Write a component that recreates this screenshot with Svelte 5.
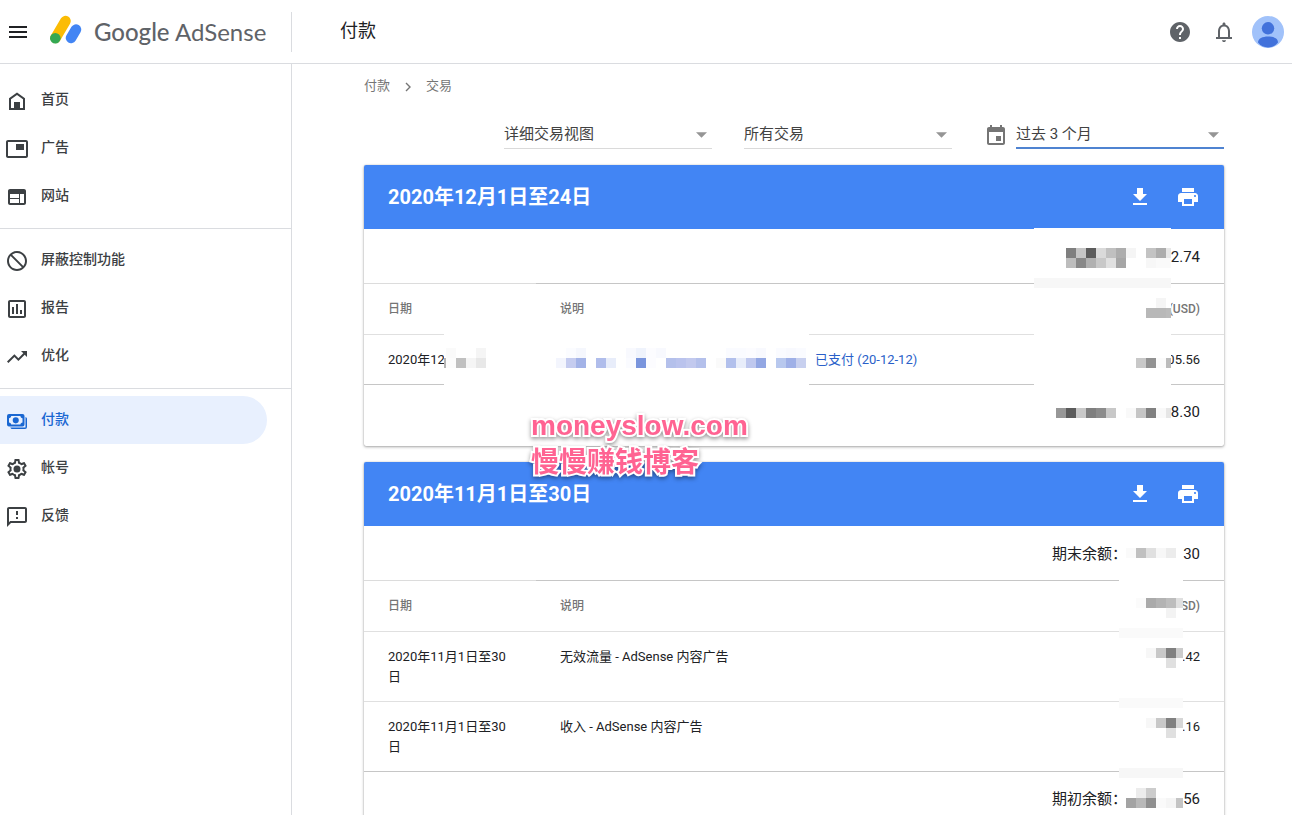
<script>
  const navGroups = [
    [
      { id: 'home', label: '首页' },
      { id: 'ads', label: '广告' },
      { id: 'sites', label: '网站' }
    ],
    [
      { id: 'block', label: '屏蔽控制功能' },
      { id: 'report', label: '报告' },
      { id: 'trend', label: '优化' }
    ],
    [
      { id: 'pay', label: '付款', active: true },
      { id: 'gear', label: '帐号' },
      { id: 'feedback', label: '反馈' }
    ]
  ];

  const icons = {
    home: 'M12 3.500 4 9.300V21h16V9.300zM18 19h-3v-6H9v6H6v-8.700l6-4.300 6 4.300z',
    ads: 'M19 7h-8v6h8V7zm2-4H3c-1.100 0-2 .9-2 2v14c0 1.100.9 2 2 2h18c1.100 0 2-.9 2-2V5c0-1.100-.9-2-2-2zm0 16H3V5h18v14z',
    sites: 'M19 4H5c-1.100 0-2 .9-2 2v12c0 1.100.9 2 2 2h14c1.100 0 2-.9 2-2V6c0-1.100-.9-2-2-2zM5 9h9v4H5V9zm0 5h9v4H5v-4zm14 4h-4V9h4v9z',
    block: 'M12 2C6.480 2 2 6.480 2 12s4.480 10 10 10 10-4.480 10-10S17.520 2 12 2zM20 12c0-4.420-3.580-8-8-8-1.850 0-3.550.63-4.900 1.690L18.310 16.900C19.370 15.550 20 13.850 20 12zm-8 8c1.850 0 3.550-.63 4.900-1.690L5.690 7.100C4.630 8.450 4 10.150 4 12c0 4.420 3.580 8 8 8z',
    report: 'M19 3H5c-1.100 0-2 .9-2 2v14c0 1.100.9 2 2 2h14c1.100 0 2-.9 2-2V5c0-1.100-.9-2-2-2zm0 16H5V5h14v14zM7 10h2v7H7zm4-3h2v10h-2zm4 6h2v4h-2z',
    trend: 'M16 6l2.290 2.290-4.880 4.880-4-4L2 16.590 3.410 18l6-6 4 4 6.300-6.290L22 12V6z',
    gear: 'M19.430 12.980c.04-.32.07-.64.07-.98s-.03-.66-.07-.98l2.110-1.650c.19-.15.24-.42.12-.64l-2-3.460c-.09-.16-.26-.25-.44-.25-.06 0-.12.01-.17.03l-2.490 1c-.52-.4-1.080-.73-1.690-.98l-.38-2.650C14.460 2.180 14.250 2 14 2h-4c-.25 0-.46.18-.49.42l-.38 2.650c-.61.25-1.170.59-1.690.98l-2.490-1c-.06-.02-.12-.03-.18-.03-.17 0-.34.09-.43.25l-2 3.460c-.13.22-.07.49.12.64l2.110 1.650c-.04.32-.07.65-.07.98s.03.66.07.98l-2.110 1.650c-.19.15-.24.42-.12.64l2 3.460c.09.16.26.25.44.25.06 0 .12-.01.17-.03l2.490-1c.52.4 1.080.73 1.690.98l.38 2.650c.03.24.24.42.49.42h4c.25 0 .46-.18.49-.42l.38-2.650c.61-.25 1.170-.59 1.690-.98l2.490 1c.06.02.12.03.18.03.17 0 .34-.09.43-.25l2-3.460c.12-.22.07-.49-.12-.64l-2.110-1.650zm-1.980-1.710c.04.31.05.52.05.73s-.02.43-.05.73l-.14 1.130.89.7 1.080.84-.7 1.210-1.270-.51-1.040-.42-.9.68c-.43.32-.84.56-1.250.73l-1.060.43-.16 1.130-.2 1.350h-1.400l-.19-1.350-.16-1.130-1.060-.43c-.43-.18-.83-.41-1.230-.71l-.91-.7-1.060.43-1.270.51-.7-1.210 1.080-.84.89-.7-.14-1.130c-.03-.31-.05-.54-.05-.74s.02-.43.05-.73l.14-1.130-.89-.7-1.080-.84.7-1.210 1.270.51 1.040.42.9-.68c.43-.32.84-.56 1.250-.73l1.060-.43.16-1.130.2-1.350h1.390l.19 1.350.16 1.130 1.060.43c.43.18.83.41 1.230.71l.91.7 1.060-.43 1.270-.51.7 1.210-1.070.85-.89.7.14 1.130zM12 8.500a3.500 3.500 0 1 0 0 7 3.500 3.500 0 0 0 0-7z',
    feedback: 'M20 2H4c-1.100 0-1.990.9-1.990 2L2 22l4-4h14c1.100 0 2-.9 2-2V4c0-1.100-.9-2-2-2zm0 14H5.170L4 17.170V4h16v12zm-9-4h2v2h-2zm0-6h2v4h-2z',
    pay: 'M4 5h13.500a2 2 0 0 1 2 2v8.500a2 2 0 0 1-2 2H4a2 2 0 0 1-2-2V7a2 2 0 0 1 2-2zm0 4.300v4.100c1.200 0 2.200 1 2.200 2.200h9.200c0-1.200 1-2.200 2.100-2.200V9.300c-1.200 0-2.100-1-2.100-2.200H6.200C6.200 8.300 5.200 9.300 4 9.300zM10.750 8.300a3.050 3.050 0 1 1 0 6.100 3.050 3.050 0 0 1 0-6.100zM20.500 8c.9.200 1.500.9 1.500 1.800V18a2 2 0 0 1-2 2H7.500c-1.200 0-2-.6-2.200-1.500h15.200z',
    download: 'M19 9h-4V3H9v6H5l7 7 7-7zM5 18v2h14v-2H5z',
    print: 'M19 8H5c-1.660 0-3 1.340-3 3v6h4v4h12v-4h4v-6c0-1.660-1.340-3-3-3zm-3 11H8v-5h8v5zm3-7c-.55 0-1-.45-1-1s.45-1 1-1 1 .45 1 1-.45 1-1 1zm-1-9H6v4h12V3z',
    help: 'M12 2C6.480 2 2 6.480 2 12s4.480 10 10 10 10-4.480 10-10S17.520 2 12 2zm1 17h-2v-2h2v2zm2.070-7.750l-.9.92C13.450 12.900 13 13.500 13 15h-2v-.5c0-1.100.45-2.100 1.170-2.830l1.240-1.260c.37-.36.59-.86.59-1.410 0-1.100-.9-2-2-2s-2 .9-2 2H8c0-2.210 1.790-4 4-4s4 1.790 4 4c0 .88-.36 1.680-.93 2.250z',
    bell: 'M18 17v-6c0-3.070-1.630-5.640-4.500-6.320V4c0-.83-.67-1.500-1.500-1.500s-1.500.67-1.500 1.500v.68C7.640 5.360 6 7.920 6 11v6H4v2h16v-2h-2zm-2 0H8v-6c0-2.480 1.510-4.500 4-4.500s4 2.020 4 4.500v6zm-6 3.200h4c0 1-.9 1.800-2 1.800s-2-.8-2-1.800z',
    calendar: 'M17 12h-5v5h5v-5zM16 1v2H8V1H6v2H5c-1.110 0-1.990.9-1.990 2L3 19c0 1.100.89 2 2 2h14c1.100 0 2-.9 2-2V5c0-1.100-.9-2-2-2h-1V1h-2zm3 18H5V8h14v11z'
  };

  const filters = [
    { id: 'view', name: '视图', value: '详细交易视图' },
    { id: 'type', name: '交易类型', value: '所有交易' },
    { id: 'range', name: '日期范围', value: '过去 3 个月', focused: true }
  ];

  // Redaction mosaics: each run is x, y and the colours of its 10px cells.
  const amountsDec = {
    width: 137,
    height: 210,
    place: 'dec-amounts',
    bands: [[50, '#f7f7f7']],
    runs: [
      [32, 20, '#7f7f7f #c5c5c5 #5c5c5c #dadada #c0c0c0 #adadad #f5f5f5'],
      [32, 30, '#bdbdbd #888888 #b0b0b0 #c8c8c8 #e0e0e0 #a6a6a6'],
      [112, 20, '#c3c3c3 #adadad #e8e8e8'],
      [112, 30, '#f7f7f7 #fafafa #fafafa'],
      [122, 70, '#f5f5f5'],
      [112, 80, '#b8b8b8 #b8b8b8 #bbbbbb'],
      [102, 130, '#c8c8c8 #929292 #fbfbfb #bbbbbb'],
      [22, 180, '#979797 #5b5b5b #c8c8c8 #7f7f7f #8c8c8c #c8c8c8'],
      [92, 180, '#f9f9f9 #c5c5c5 #808080 #f9f9f9 #e6e6e6']
    ]
  };
  const detailsDec = {
    width: 365,
    height: 66,
    place: 'dec-details',
    bands: [],
    runs: [
      [-8, 30, '#b5b5b5'],
      [2, 20, '#fafafa'],
      [32, 20, '#f5f5f5'],
      [2, 30, '#fcfcfc #c0c0c0 #f5f5f5 #e8e8e8'],
      [112, 30, '#f3f5fd #c5ccef #a3b3e7'],
      [122, 20, '#fbfcff #f5f7fd'],
      [152, 30, '#b0bdeb #e8edfa'],
      [182, 20, '#f8f9fe #eff3fc #fcfcff #f8f9fe'],
      [182, 30, '#fafbff #7a95dd #fcfcff'],
      [222, 30, '#b4c0eb #bac3ed #c2c9ee #b4c0eb'],
      [272, 30, '#fafafa #b2c0ec #e8edfa #bfc8ee #93a7e3'],
      [282, 20, '#fafbff #fafbff #fcfcff #f8f9fe'],
      [332, 30, '#b8c8ee #9fb0e7 #c8d0ef'],
      [332, 20, '#fafbff #f8f9fe #fafbff']
    ]
  };
  const amountsNov = {
    width: 64,
    height: 266,
    place: 'nov-amounts',
    bands: [
      [86, '#fafafa'],
      [156, '#fafafa'],
      [226, '#f7f7f7']
    ],
    runs: [
      [7, 6, '#fafafa #c0c0c0 #e0e0e0 #f7f7f7 #ececec'],
      [17, 56, '#fbfbfb #aaaaaa #b3b3b3 #bdbdbd #e0e0e0'],
      [47, 66, '#f3f3f3'],
      [27, 106, '#f7f7f7 #c8c8c8 #808080 #cccccc'],
      [47, 116, '#e0e0e0'],
      [27, 176, '#f7f7f7 #c8c8c8 #808080 #d6d6d6'],
      [47, 186, '#e0e0e0'],
      [17, 246, '#ececec #cccccc'],
      [7, 256, '#a3a3a3 #b8b8b8 #8f8f8f #fafafa #f5f5f5 #c4c4c4']
    ]
  };

  const statements = [
    {
      title: '2020年12月1日至24日',
      closing: { label: '', amount: '2.74' },
      opening: { label: '', amount: '8.30' },
      currency: '(USD)',
      rows: [{ date: '2020年12', link: '已支付 (20-12-12)', amount: '05.56' }],
      mosaics: [amountsDec, detailsDec]
    },
    {
      title: '2020年11月1日至30日',
      closing: { label: '期末余额：', amount: '30' },
      opening: { label: '期初余额：', amount: '56' },
      currency: '(USD)',
      rows: [
        { date: '2020年11月1日至30日', text: '无效流量 - AdSense 内容广告', amount: '.42' },
        { date: '2020年11月1日至30日', text: '收入 - AdSense 内容广告', amount: '.16' }
      ],
      mosaics: [amountsNov]
    }
  ];
</script>

{#snippet icon(id)}
  <svg class="icon" viewBox="0 0 24 24" aria-hidden="true"><path fill-rule="evenodd" d={icons[id]} /></svg>
{/snippet}

{#snippet mosaic(m)}
  <svg class="mosaic {m.place}" width={m.width} height={m.height} shape-rendering="crispEdges" aria-hidden="true">
    <rect width={m.width} height={m.height} fill="#fff" />
    {#each m.bands as [y, fill]}
      <rect {y} width={m.width} height="10" {fill} />
    {/each}
    {#each m.runs as [x, y, cells]}
      {#each cells.split(' ') as fill, i}
        <rect x={x + i * 10} {y} width="10" height="10" {fill} />
      {/each}
    {/each}
  </svg>
{/snippet}

<div class="app">
  <header class="topbar">
    <div class="brand">
      <button class="plain" aria-label="菜单">
        <svg class="menu" viewBox="0 0 18 12"><path d="M0 0h18v2H0zm0 5h18v2H0zm0 5h18v2H0z" /></svg>
      </button>
      <a class="logo" href="#home">
        <svg class="mark" viewBox="0 0 33 30" aria-hidden="true">
          <path d="M16.500 6 6.500 23" stroke="#fbbc04" stroke-width="10.500" stroke-linecap="round" />
          <path d="M27 14.500 22 23" stroke="#4285f4" stroke-width="10.500" stroke-linecap="round" />
          <circle cx="6.300" cy="23.300" r="5.300" fill="#34a853" />
        </svg>
        <span class="wordmark"><b>Google</b> AdSense</span>
      </a>
    </div>
    <h1>付款</h1>
    <div class="tools">
      <button class="plain" aria-label="帮助">{@render icon('help')}</button>
      <button class="plain" aria-label="通知">{@render icon('bell')}</button>
      <button class="plain" aria-label="帐号资料">
        <svg class="avatar" viewBox="0 0 32 32">
          <circle cx="16" cy="16" r="16" fill="#a1c2fa" />
          <circle cx="16" cy="12.300" r="6.200" fill="#4272db" />
          <path d="M6 26.500c0-4 4.500-6 10-6s10 2 10 6c-2.500 3.400-6 4.900-10 4.900s-7.500-1.500-10-4.900z" fill="#4272db" />
        </svg>
      </button>
    </div>
  </header>

  <div class="body">
    <nav class="sidebar">
      {#each navGroups as group}
        <ul>
          {#each group as item}
            <li>
              <a href="#{item.id}" class:active={item.active}>
                {@render icon(item.id)}<span>{item.label}</span>
              </a>
            </li>
          {/each}
        </ul>
      {/each}
    </nav>

    <main>
      <div class="crumbs">
        <a href="#pay">付款</a>
        <svg viewBox="0 0 6 10" aria-hidden="true"><path d="m1 1 4 4-4 4" /></svg>
        <a href="#transactions">交易</a>
      </div>

      <div class="filters">
        {#each filters as f}
          <div class="filter" class:focused={f.focused}>
            {#if f.focused}{@render icon('calendar')}{/if}
            <div class="field">
              <select id={f.id} aria-label={f.name}><option>{f.value}</option></select>
              <svg class="arrow" viewBox="0 0 12 6" aria-hidden="true"><path d="M0 0h12L6 6z" /></svg>
            </div>
          </div>
        {/each}
      </div>

      {#each statements as s}
        <section class="card">
          <div class="card-head">
            <h2>{s.title}</h2>
            <button class="plain" aria-label="下载">{@render icon('download')}</button>
            <button class="plain" aria-label="打印">{@render icon('print')}</button>
          </div>
          <div class="balance closing"><span>{s.closing.label}</span><span>{s.closing.amount}</span></div>
          <table>
            <thead>
              <tr><th class="date">日期</th><th>说明</th><th class="amount">{s.currency}</th></tr>
            </thead>
            <tbody>
              {#each s.rows as row}
                <tr>
                  <td>{row.date}</td>
                  <td>
                    {#if row.link}<a class="paid" href="#receipt">{row.link}</a>{:else}{row.text}{/if}
                  </td>
                  <td class="amount">{row.amount}</td>
                </tr>
              {/each}
            </tbody>
          </table>
          <div class="balance"><span>{s.opening.label}</span><span>{s.opening.amount}</span></div>
          {#each s.mosaics as m}{@render mosaic(m)}{/each}
        </section>
      {/each}
      <div class="watermark">moneyslow.com<br />慢慢赚钱博客</div>
    </main>
  </div>
</div>

<style>
  :global(body) {
    background: #fff;
  }
  .app {
    display: flex;
    flex-direction: column;
    height: 100vh;
    font-family: Roboto, 'Noto Sans CJK SC', sans-serif;
    line-height: 20px;
    color: #202124;
  }
  .app * {
    box-sizing: border-box;
  }
  a {
    color: inherit;
    text-decoration: none;
  }
  .plain {
    display: flex;
    justify-content: center;
    padding: 0;
    border: 0;
    background: none;
    color: inherit;
    cursor: pointer;
  }
  .icon {
    flex: none;
    width: 24px;
    height: 24px;
    fill: currentColor;
  }

  .topbar {
    display: flex;
    flex: none;
    align-items: center;
    height: 64px;
    padding-right: 8px;
    border-bottom: 1px solid #dadce0;
  }
  .brand {
    display: flex;
    align-items: center;
    gap: 22px;
    width: 292px;
    height: 40px;
    padding-left: 9px;
    border-right: 1px solid #dadce0;
  }
  .menu {
    width: 18px;
    height: 12px;
    fill: #202124;
  }
  .logo {
    display: flex;
    align-items: center;
    gap: 12px;
  }
  .mark {
    width: 33px;
    height: 30px;
    margin-bottom: 4px;
    fill: none;
  }
  .wordmark {
    font: 24px/32px Lato, sans-serif;
    color: #5f6368;
    white-space: nowrap;
  }
  .wordmark b {
    font-weight: 500;
  }
  h1 {
    flex: 1;
    margin: 0;
    padding: 0 0 2px 48px;
    font-size: 18px;
    font-weight: 400;
    line-height: 24px;
  }
  .tools {
    display: flex;
    align-items: center;
    gap: 12px;
    color: #5f6368;
  }
  .tools .plain {
    width: 32px;
  }
  .avatar {
    width: 32px;
    height: 32px;
  }

  .body {
    display: flex;
    flex: 1;
    min-height: 0;
  }
  .sidebar {
    flex: none;
    width: 292px;
    padding-top: 4px;
    border-right: 1px solid #dadce0;
    color: #3c4043;
  }
  ul {
    margin: 0;
    padding: 8px 0;
    list-style: none;
  }
  ul + ul {
    padding-top: 7px;
    border-top: 1px solid #dadce0;
  }
  li a {
    display: flex;
    align-items: center;
    gap: 12px;
    height: 48px;
    margin-right: 24px;
    padding: 2px 0 0 5px;
    border-radius: 0 24px 24px 0;
    font-size: 14px;
    font-weight: 500;
  }
  li span {
    padding-bottom: 4px;
  }
  li .active {
    background: #e8f0fe;
    color: #1967d2;
  }

  main {
    position: relative;
    flex: 1;
    min-width: 0;
    padding: 12px 68px 0 72px;
    overflow-y: auto;
    scrollbar-width: none;
  }
  .crumbs {
    display: flex;
    align-items: center;
    gap: 15px;
    height: 22px;
    font-size: 13px;
    color: #757575;
  }
  .crumbs a {
    padding-bottom: 2px;
  }
  .crumbs svg {
    width: 6px;
    height: 10px;
    fill: none;
    stroke: #757575;
    stroke-width: 1.400;
  }
  .filters {
    display: flex;
    justify-content: flex-end;
    gap: 32px;
    margin: 21px 0 16px;
  }
  .filter {
    display: flex;
    align-items: center;
    gap: 8px;
    color: #757575;
  }
  .filter .icon {
    margin-top: 3px;
  }
  .field {
    position: relative;
    width: 208px;
  }
  select {
    display: block;
    width: 100%;
    height: 30px;
    padding: 2px 0 1px;
    border: 0;
    border-bottom: 1px solid #dadada;
    border-radius: 0;
    outline: 0;
    appearance: none;
    background: none;
    font: inherit;
    font-size: 15px;
    color: #424242;
  }
  .focused select {
    padding-bottom: 0;
    border-bottom: 2px solid #4f83d1;
  }
  .arrow {
    position: absolute;
    top: 13px;
    right: 5px;
    width: 11px;
    height: 6px;
    fill: #959595;
    pointer-events: none;
  }

  .card {
    position: relative;
    margin-bottom: 16px;
    padding-bottom: 7px;
    border-radius: 2px;
    box-shadow: 0 1px 3px rgba(0, 0, 0, 0.35), 0 0 1px rgba(0, 0, 0, 0.3);
    background: #fff;
  }
  .card-head {
    display: flex;
    align-items: center;
    gap: 24px;
    height: 64px;
    padding: 0 24px;
    border-radius: 2px 2px 0 0;
    background: #4285f4;
    color: #fff;
  }
  h2 {
    flex: 1;
    margin: 0;
    font-size: 20px;
    font-weight: 700;
    line-height: 28px;
  }
  .balance {
    display: flex;
    align-items: center;
    justify-content: flex-end;
    gap: 56px;
    height: 54px;
    padding: 0 24px;
    font-size: 15px;
  }
  .closing {
    padding-top: 2px;
  }
  table {
    width: 100%;
    border-collapse: separate;
    border-spacing: 0;
    table-layout: fixed;
    font-size: 13px;
  }
  th,
  td {
    padding: 15px 24px 14px;
    border-top: 1px solid #e0e0e0;
    text-align: left;
    vertical-align: top;
    font-weight: 400;
  }
  th {
    padding-bottom: 15px;
    border-color: #c6c6c6;
    font-size: 12px;
    font-weight: 500;
    color: #757575;
  }
  .date {
    width: 172px;
    border-color: #dcdcdc;
  }
  .amount {
    width: 170px;
    text-align: right;
  }
  tbody tr:last-child td {
    border-bottom: 1px solid #c6c6c6;
  }
  .paid {
    margin-left: 255px;
    color: #2a5fc9;
    white-space: nowrap;
  }

  .mosaic {
    position: absolute;
    overflow: hidden;
  }
  .dec-amounts {
    top: 63px;
    right: 53px;
  }
  .dec-details {
    top: 163px;
    left: 80px;
  }
  .nov-amounts {
    top: 80px;
    right: 41px;
  }

  .watermark {
    position: absolute;
    top: 343px;
    left: 239px;
    font: bold 28px/37px 'Liberation Sans', 'Noto Sans CJK SC', sans-serif;
    color: #ff6392;
    -webkit-text-stroke: 4px #fff;
    paint-order: stroke fill;
    filter: drop-shadow(0 2px 2px rgba(0, 0, 0, 0.4));
    pointer-events: none;
  }
</style>
